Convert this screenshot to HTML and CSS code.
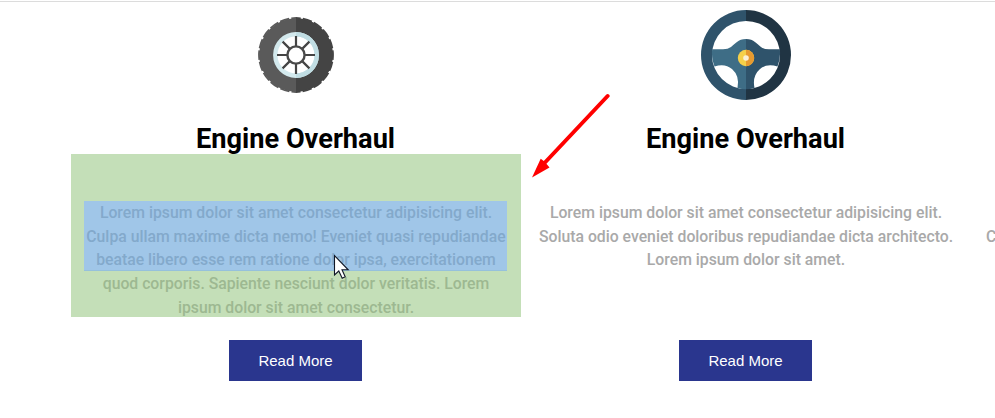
FILE: index.html
```html
<!DOCTYPE html>
<html lang="en">
<head>
<meta charset="utf-8">
<title>Services</title>
<link rel="stylesheet" href="styles.css">
</head>
<body>
<main class="services">
  <article class="card">
    <svg class="icon" viewBox="0 0 90 90" aria-hidden="true">
      <g transform="translate(45 45)">
        <circle r="36.8" fill="#5a5a5a"/>
        <path d="M0-37A37 37 0 0 0 0 37" fill="none" stroke="#5a5a5a" stroke-width="1.8" stroke-dasharray="9.5 2.124" stroke-dashoffset="4.75"/>
        <path d="M0-36.8A36.8 36.8 0 0 1 0 36.8Z" fill="#444"/>
        <path d="M0-37A37 37 0 0 1 0 37" fill="none" stroke="#444" stroke-width="1.8" stroke-dasharray="9.5 2.124" stroke-dashoffset="4.75"/>
        <circle r="20.7" fill="#fff" stroke="#d3e9ed" stroke-width="4.4"/>
        <path d="M0-20.7A20.7 20.7 0 0 1 0 20.7" fill="none" stroke="#c0dde3" stroke-width="4.4"/>
        <path d="M0-19V19M-19 0H19M-13.4-13.4L13.4 13.4M13.4-13.4L-13.4 13.4" stroke="#444" stroke-width="2.2"/>
        <circle r="8.6" fill="#fff" stroke="#4a4a4a" stroke-width="2.4"/>
      </g>
    </svg>
    <h2 class="title">Engine Overhaul</h2>
    <div class="text inspected">
      <p>Lorem ipsum dolor sit amet consectetur adipisicing elit. Culpa ullam maxime dicta nemo! Eveniet quasi repudiandae beatae libero esse rem ratione dolor ipsa, exercitationem quod corporis. Sapiente nesciunt dolor veritatis. Lorem ipsum dolor sit amet consectetur.</p>
    </div>
    <a class="button">Read More</a>
  </article>
  <article class="card">
    <svg class="icon" viewBox="0 0 90 90" aria-hidden="true">
      <path d="M45 0A45 45 0 0 0 45 90V79A34 34 0 0 1 45 11Z" fill="#2f536b"/>
      <path d="M45 0A45 45 0 0 1 45 90V79A34 34 0 0 0 45 11Z" fill="#203443"/>
      <path d="M45 29C37 29 34 34 30 37Q27 39.3 22 39.3H11.2Q10 47 13.5 56.5Q24 53 31 59Q39 66 36.5 78Q41 79.3 45 79.3Z" fill="#3e6d86"/>
      <path d="M45 29C53 29 56 34 60 37Q63 39.3 68 39.3H78.8Q80 47 76.5 56.5Q66 53 59 59Q51 66 53.5 78Q49 79.3 45 79.3Z" fill="#2f536b"/>
      <circle cx="45" cy="48" r="8.2" fill="#f5d04a"/>
      <path d="M45 39.8A8.2 8.2 0 0 1 45 56.2Z" fill="#e79a30"/>
      <circle cx="45" cy="48" r="2.8" fill="#fbf0d5"/>
    </svg>
    <h2 class="title">Engine Overhaul</h2>
    <div class="text">
      <p>Lorem ipsum dolor sit amet consectetur adipisicing elit. Soluta odio eveniet doloribus repudiandae dicta architecto. Lorem ipsum dolor sit amet.</p>
    </div>
    <a class="button">Read More</a>
  </article>
  <article class="card peek">
    <div class="text">
      <p>C</p>
    </div>
  </article>
</main>
<svg class="arrow" viewBox="0 0 80 86" aria-hidden="true">
  <path d="M77.6 4L15 70.5" stroke="#f00" stroke-width="4" stroke-linecap="round"/>
  <path d="M2 85.5L10.7 66.8L14.5 69.5L19.5 75.5Z" fill="#f00"/>
</svg>
<svg class="pointer" viewBox="0 0 17 26" aria-hidden="true">
  <path d="M1.5 1.5V21L5.8 17L9.2 24.2L12.2 22.8L9 15.8H15.2Z" fill="#fff" stroke="#111827" stroke-width="1.1"/>
</svg>
</body>
</html>
```
FILE: styles.css
```css
* {
  box-sizing: border-box;
}

body {
  margin: 0;
  height: 418px;
  overflow: hidden;
  background: #fff;
  font-family: Roboto, sans-serif;
}

.services {
  display: grid;
  grid-template-columns: 450px 450px 24px;
  height: 417px;
  padding: 8px 0 0 71px;
  border-top: 1px solid #dcdcdc;
  margin-top: 1px;
  overflow: hidden;
}

.card {
  display: flex;
  flex-direction: column;
  align-items: center;
}

.icon {
  display: block;
  width: 90px;
  height: 90px;
}

.title {
  margin: 24px 1px 0 0;
  height: 30px;
  font-size: 27.2px;
  font-weight: 700;
  line-height: 31px;
  color: #000;
}

.text {
  position: relative;
  width: 450px;
  height: 163px;
  padding: 47px 13px 0;
}

.text p {
  margin: 0;
  font-size: 15.77px;
  font-weight: 500;
  line-height: 23.7px;
  text-align: center;
  color: #a9a9a9;
}

/* Next card starts at the viewport edge; only its second text line shows */
.peek {
  align-items: flex-start;
  overflow: hidden;
}

.peek .text {
  width: 24px;
  margin-top: 144px;
  padding: 71px 0 0 15px;
}

.peek .text p {
  text-align: left;
}

/* Box model highlight: padding in green, content in blue */
.inspected::before {
  content: "";
  position: absolute;
  inset: 0;
  background: rgba(147, 196, 125, 0.55);
  clip-path: polygon(evenodd, 0 0, 450px 0, 450px 163px, 0 163px, 0 0, 13px 47px, 436px 47px, 436px 116.5px, 13px 116.5px, 13px 47px);
}

.inspected::after {
  content: "";
  position: absolute;
  left: 13px;
  top: 47px;
  width: 423px;
  height: 69.5px;
  background: rgba(111, 168, 220, 0.66);
}

.button {
  width: 133px;
  height: 41px;
  margin: 23px 1px 0 0;
  background: #2a368e;
  color: #fff;
  font-family: "Liberation Sans", Arial, sans-serif;
  font-size: 15px;
  line-height: 41px;
  text-align: center;
}

.arrow {
  position: absolute;
  left: 530px;
  top: 92px;
  width: 80px;
  height: 86px;
  fill: none;
}

.pointer {
  position: absolute;
  left: 333px;
  top: 254px;
  width: 17px;
  height: 26px;
}
```
